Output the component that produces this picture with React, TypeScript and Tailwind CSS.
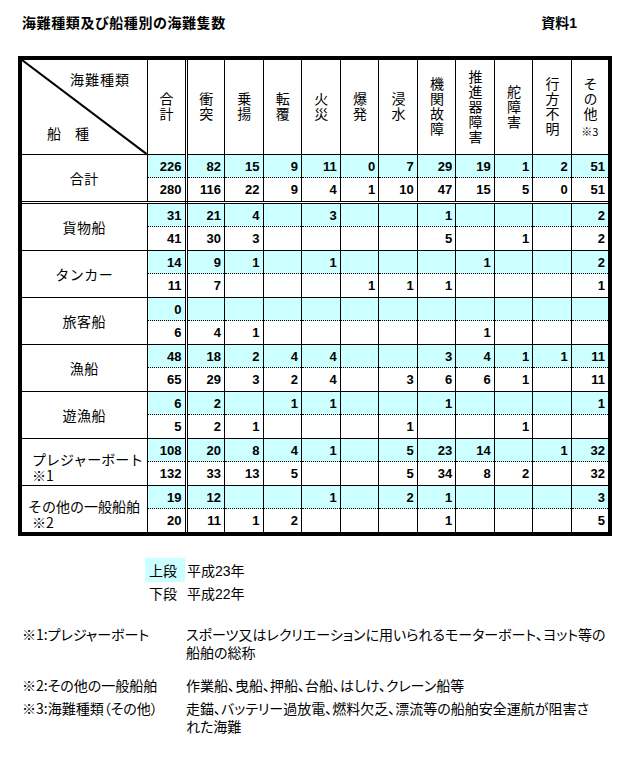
import React from "react";

type Val = number | null;
type Group = { name: string; note?: string; top: Val[]; bottom: Val[]; double?: boolean };

const _ = null;

const groups: Group[] = [
  { name: "合計", top: [226, 82, 15, 9, 11, 0, 7, 29, 19, 1, 2, 51], bottom: [280, 116, 22, 9, 4, 1, 10, 47, 15, 5, 0, 51], double: true },
  { name: "貨物船", top: [31, 21, 4, _, 3, _, _, 1, _, _, _, 2], bottom: [41, 30, 3, _, _, _, _, 5, _, 1, _, 2] },
  { name: "タンカー", top: [14, 9, 1, _, 1, _, _, _, 1, _, _, 2], bottom: [11, 7, _, _, _, 1, 1, 1, _, _, _, 1] },
  { name: "旅客船", top: [0, _, _, _, _, _, _, _, _, _, _, _], bottom: [6, 4, 1, _, _, _, _, _, 1, _, _, _] },
  { name: "漁船", top: [48, 18, 2, 4, 4, _, _, 3, 4, 1, 1, 11], bottom: [65, 29, 3, 2, 4, _, 3, 6, 6, 1, _, 11] },
  { name: "遊漁船", top: [6, 2, _, 1, 1, _, _, 1, _, _, _, 1], bottom: [5, 2, 1, _, _, _, 1, _, _, 1, _, _] },
  { name: "プレジャーボート", note: "※1", top: [108, 20, 8, 4, 1, _, 5, 23, 14, _, 1, 32], bottom: [132, 33, 13, 5, _, _, 5, 34, 8, 2, _, 32] },
  { name: "その他の一般船舶", note: "※2", top: [19, 12, _, _, 1, _, 2, 1, _, _, _, 3], bottom: [20, 11, 1, 2, _, _, _, 1, _, _, _, 5] },
];

const headers = ["合計", "衝突", "乗揚", "転覆", "火災", "爆発", "浸水", "機関故障", "推進器障害", "舵障害", "行方不明", "その他"];

const num = "font-['Liberation_Sans',Arial,sans-serif]";

function HeaderCell({ label, index }: { label: string; index: number }) {
  return (
    <td
      className={
        "border border-black p-0 align-middle text-center " +
        (index === 0 ? "border-r-[3px] [border-right-style:double]" : "")
      }
    >
      <div className="flex flex-col items-center text-black">
        <div className="[writing-mode:vertical-rl] [text-orientation:upright] text-[14px] leading-[15px] tracking-[1px]">
          {label}
        </div>
        {label === "その他" && <div className="mt-[3px] text-[11px] leading-[13px]">※3</div>}
      </div>
    </td>
  );
}

export default function App() {
  return (
    <div className="w-[635px] h-[757px] bg-white text-black font-['Noto_Sans_CJK_JP','Noto_Sans',sans-serif] overflow-hidden">
      {/* Title */}
      <div className="flex items-center pt-[13px] pl-[22px] pr-[58px] h-[18px] box-content [font-feature-settings:'palt']">
        <div className="text-[14px] font-bold leading-[18px] tracking-[0.6px]">海難種類及び船種別の海難隻数</div>
        <div className="ml-auto text-[14px] font-bold leading-[18px]">
          資料<span className={num}>1</span>
        </div>
      </div>

      {/* Table */}
      <table className="ml-[18px] mt-[25px] w-[594px] table-fixed border-collapse border-4 border-black">
        <colgroup>
          <col className="w-[127px]" />
          <col className="w-[39px]" />
          {headers.slice(1).map((h) => (
            <col key={h} />
          ))}
        </colgroup>
        <tbody>
          <tr className="h-[94px]">
            <td className="border border-black p-0 relative">
              <svg className="absolute inset-0 w-full h-full" viewBox="0 0 100 100" preserveAspectRatio="none">
                <line x1="0" y1="0" x2="100" y2="100" stroke="black" strokeWidth="2" vectorEffect="non-scaling-stroke" />
              </svg>
              <div className="relative flex flex-col justify-between h-[94px] pt-[11px] pb-[12px] text-[14px] leading-[17px]">
                <div className="pl-[48px] tracking-[1px]">海難種類</div>
                <div className="pl-[25px]">船　種</div>
              </div>
            </td>
            {headers.map((h, i) => (
              <HeaderCell key={h} label={h} index={i} />
            ))}
          </tr>
          {groups.map((g) => (
            <tr key={g.name}>
              <td
                className={
                  "border border-black p-0 align-middle " +
                  (g.double ? "border-b-[3px] [border-bottom-style:double]" : "")
                }
              >
                {g.note ? (
                  <div
                    className={
                      "flex flex-col pt-[10px] text-[14px] leading-[16px] " +
                      (g.note === "※1" ? "pl-[10px]" : "pl-[6px]")
                    }
                  >
                    <span className="whitespace-nowrap">{g.name}</span>
                    <span className={g.note === "※1" ? "" : "pl-[4px]"}>{g.note}</span>
                  </div>
                ) : (
                  <div className="text-center text-[14px] leading-[18px] tracking-[0.5px]">{g.name}</div>
                )}
              </td>
              {g.top.map((t, i) => (
                <td
                  key={i}
                  className={
                    "border border-black p-0 " +
                    (i === 0 ? "border-r-[3px] [border-right-style:double] " : "") +
                    (g.double ? "border-b-[3px] [border-bottom-style:double]" : "")
                  }
                >
                  <div className={"h-[23px] bg-[#ccffff] border-b border-dotted border-black flex items-center justify-end pr-[3px] font-bold text-[13px] leading-none " + num}>
                    {t !== null ? t : ""}
                  </div>
                  <div className={"h-[23px] flex items-center justify-end pr-[3px] font-bold text-[13px] leading-none " + num}>
                    {g.bottom[i] !== null ? g.bottom[i] : ""}
                  </div>
                </td>
              ))}
            </tr>
          ))}
        </tbody>
      </table>

      {/* Legend */}
      <div className="mt-[22px] pl-[145px] text-[14px] leading-[22px] [font-feature-settings:'palt']">
        <div className="flex items-center h-[24px]">
          <span className="w-[40px] h-[24px] bg-[#ccffff] pl-[4px] flex items-center">上段</span>
          <span className="ml-[2px]">
            平成<span className={num}>23</span>年
          </span>
        </div>
        <div className="flex items-center h-[22px]">
          <span className="w-[40px] pl-[4px]">下段</span>
          <span className="ml-[2px]">
            平成<span className={num}>22</span>年
          </span>
        </div>
      </div>

      {/* Notes */}
      <div className="mt-[21px] pl-[22px] grid grid-cols-[164px_1fr] text-[14px] leading-[18px] [font-feature-settings:'palt']">
        <div className="whitespace-nowrap">※1:プレジャーボート</div>
        <div className="whitespace-nowrap">
          スポーツ又はレクリエーションに用いられるモーターボート、ヨット等の
          <br />
          船舶の総称
        </div>
        <div className="mt-[15px] whitespace-nowrap">※2:その他の一般船舶</div>
        <div className="mt-[15px] whitespace-nowrap">作業船、曳船、押船、台船、はしけ、クレーン船等</div>
        <div className="mt-[5px] whitespace-nowrap">※3:海難種類（その他）</div>
        <div className="mt-[5px] whitespace-nowrap">
          走錨、バッテリー過放電、燃料欠乏、漂流等の船舶安全運航が阻害さ
          <br />
          れた海難
        </div>
      </div>
    </div>
  );
}
